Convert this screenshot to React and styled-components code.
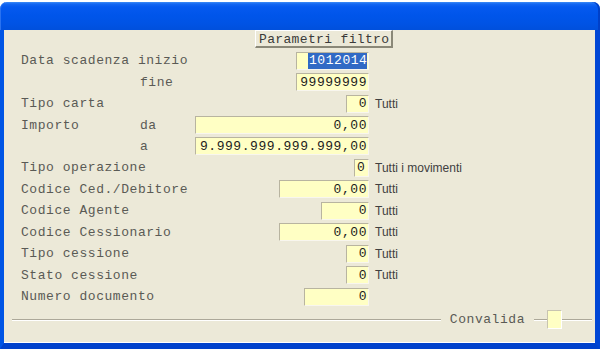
import React from 'react';
import styled, { createGlobalStyle } from 'styled-components';

const GlobalStyle = createGlobalStyle`
  html, body {
    margin: 0;
    padding: 0;
    background: #ffffff;
  }
  #root {
    width: 600px;
    height: 349px;
  }
`;

const rows = [
    { label: 'Data scadenza inizio', width: 73, value: '1012014', selected: true },
    { sub: 'fine', width: 73, value: '99999999' },
    { label: 'Tipo carta', width: 23, value: '0', note: 'Tutti' },
    { label: 'Importo', sub: 'da', width: 174, value: '0,00' },
    { sub: 'a', width: 174, value: '9.999.999.999.999,00' },
    { label: 'Tipo operazione', width: 15, value: '0', note: 'Tutti i movimenti', narrow: true },
    { label: 'Codice Ced./Debitore', width: 90, value: '0,00', note: 'Tutti' },
    { label: 'Codice Agente', width: 48, value: '0', note: 'Tutti' },
    { label: 'Codice Cessionario', width: 90, value: '0,00', note: 'Tutti' },
    { label: 'Tipo cessione', width: 23, value: '0', note: 'Tutti' },
    { label: 'Stato cessione', width: 23, value: '0', note: 'Tutti' },
    { label: 'Numero documento', width: 65, value: '0' },
];

function App() {
    return (
        <>
            <GlobalStyle />
            <Window>
                <TitleBar />
                <Client>
                    <Header>
                        <Caption>Parametri filtro</Caption>
                    </Header>
                    <Form>
                        {rows.map((row, index) => (
                            <Row key={index}>
                                <LabelCell>
                                    <Label>{row.label || ''}</Label>
                                    {row.sub && <SubLabel>{row.sub}</SubLabel>}
                                </LabelCell>
                                <FieldCell>
                                    <Field width={row.width} narrow={row.narrow}>
                                        {row.selected
                                            ? <Selection>{row.value}</Selection>
                                            : row.value}
                                    </Field>
                                </FieldCell>
                                <Note>{row.note || ''}</Note>
                            </Row>
                        ))}
                    </Form>
                    <Footer>
                        <Line />
                        <FooterLabel>Convalida</FooterLabel>
                        <Line size={13} />
                        <CheckBox />
                        <Line size={30} />
                    </Footer>
                </Client>
            </Window>
        </>
    );
}

export default App;

const Window = styled.div`
    width: 600px;
    height: 349px;
    padding-top: 2px;
    box-sizing: border-box;
    display: flex;
    flex-direction: column;
`

const TitleBar = styled.div`
    height: 28px;
    flex-shrink: 0;
    border-radius: 7px 7px 0 0;
    background: linear-gradient(to bottom,
        #3d8cf6 0px, #1467f2 2px, #0559ef 5px, #0055ea 14px, #0053e4 22px, #0050dc 28px);
    box-shadow: inset -2px 0 0 #0040c8, inset 1px 0 0 #2a72f0;
`

const Client = styled.div`
    flex: 1;
    display: flex;
    flex-direction: column;
    background: #ece9d8;
    border-left: 4px solid #0055e5;
    border-right: 5px solid #0046d5;
    border-bottom: 6px solid #0042cc;
    box-shadow: inset 0 -1px 0 #ffffff;
`

const Header = styled.div`
    height: 20px;
    padding-left: 251px;
    display: flex;
    align-items: flex-start;
`

const Caption = styled.div`
    height: 18px;
    line-height: 17px;
    box-sizing: border-box;
    padding: 0 2px 0 3px;
    font-family: "Liberation Mono", "Courier New", monospace;
    font-size: 13px;
    letter-spacing: 0.35px;
    color: #3a3a3a;
    background: #ece9d8;
    border-top: 1px solid #ffffff;
    border-left: 1px solid #ffffff;
    border-right: 2px solid #8a8878;
    border-bottom: 2px solid #8a8878;
`

const Form = styled.div`
    display: grid;
    grid-auto-rows: 21.45px;
    padding-left: 17px;
`

const Row = styled.div`
    display: grid;
    grid-template-columns: 174px 174px auto;
    align-items: center;
`

const LabelCell = styled.div`
    display: flex;
    align-items: center;
    position: relative;
    height: 100%;
`

const Label = styled.span`
    font-family: "Liberation Mono", "Courier New", monospace;
    font-size: 13px;
    letter-spacing: 0.55px;
    color: #5a5a55;
    white-space: pre;
`

const SubLabel = styled(Label)`
    position: absolute;
    left: 119px;
`

const FieldCell = styled.div`
    display: flex;
    justify-content: flex-end;
`

const Field = styled.div`
    width: ${props => props.width}px;
    height: 18px;
    box-sizing: border-box;
    display: flex;
    align-items: center;
    justify-content: ${props => props.narrow ? 'flex-start' : 'flex-end'};
    padding: ${props => props.narrow ? '0 0 0 2px' : '0 1px 0 0'};
    background: #ffffc4;
    border-top: 1px solid #b8b4a0;
    border-left: 1px solid #b8b4a0;
    border-bottom: 1px solid #f8f6ee;
    border-right: 1px solid #f8f6ee;
    font-family: "Liberation Mono", "Courier New", monospace;
    font-size: 13px;
    letter-spacing: 0.55px;
    color: #1c1c1c;
    white-space: pre;
    overflow: hidden;
`

const Selection = styled.span`
    background: #316ac5;
    color: #ffffff;
    height: 16px;
    line-height: 16px;
    padding-left: 1px;
    width: 59px;
    text-align: right;
    box-sizing: border-box;
`

const Note = styled.span`
    padding-left: 6px;
    font-family: "Liberation Sans", Arial, sans-serif;
    font-size: 12px;
    color: #404040;
    white-space: nowrap;
`

const Footer = styled.div`
    margin-top: auto;
    height: 19px;
    margin-bottom: 14px;
    padding: 0 3px 0 8px;
    display: flex;
    align-items: center;
`

const Line = styled.div`
    flex: ${props => props.size ? `0 0 ${props.size}px` : '1'};
    height: 1px;
    background: #aca899;
    box-shadow: 0 1px 0 #ffffff;
`

const FooterLabel = styled.span`
    padding: 0 9px;
    font-family: "Liberation Mono", "Courier New", monospace;
    font-size: 13px;
    letter-spacing: 0.55px;
    color: #5a5a55;
`

const CheckBox = styled.div`
    width: 15px;
    height: 19px;
    box-sizing: border-box;
    background: #ffffc4;
    border-top: 1px solid #c8c4b0;
    border-left: 1px solid #c8c4b0;
    border-bottom: 1px solid #ffffff;
    border-right: 1px solid #ffffff;
`
